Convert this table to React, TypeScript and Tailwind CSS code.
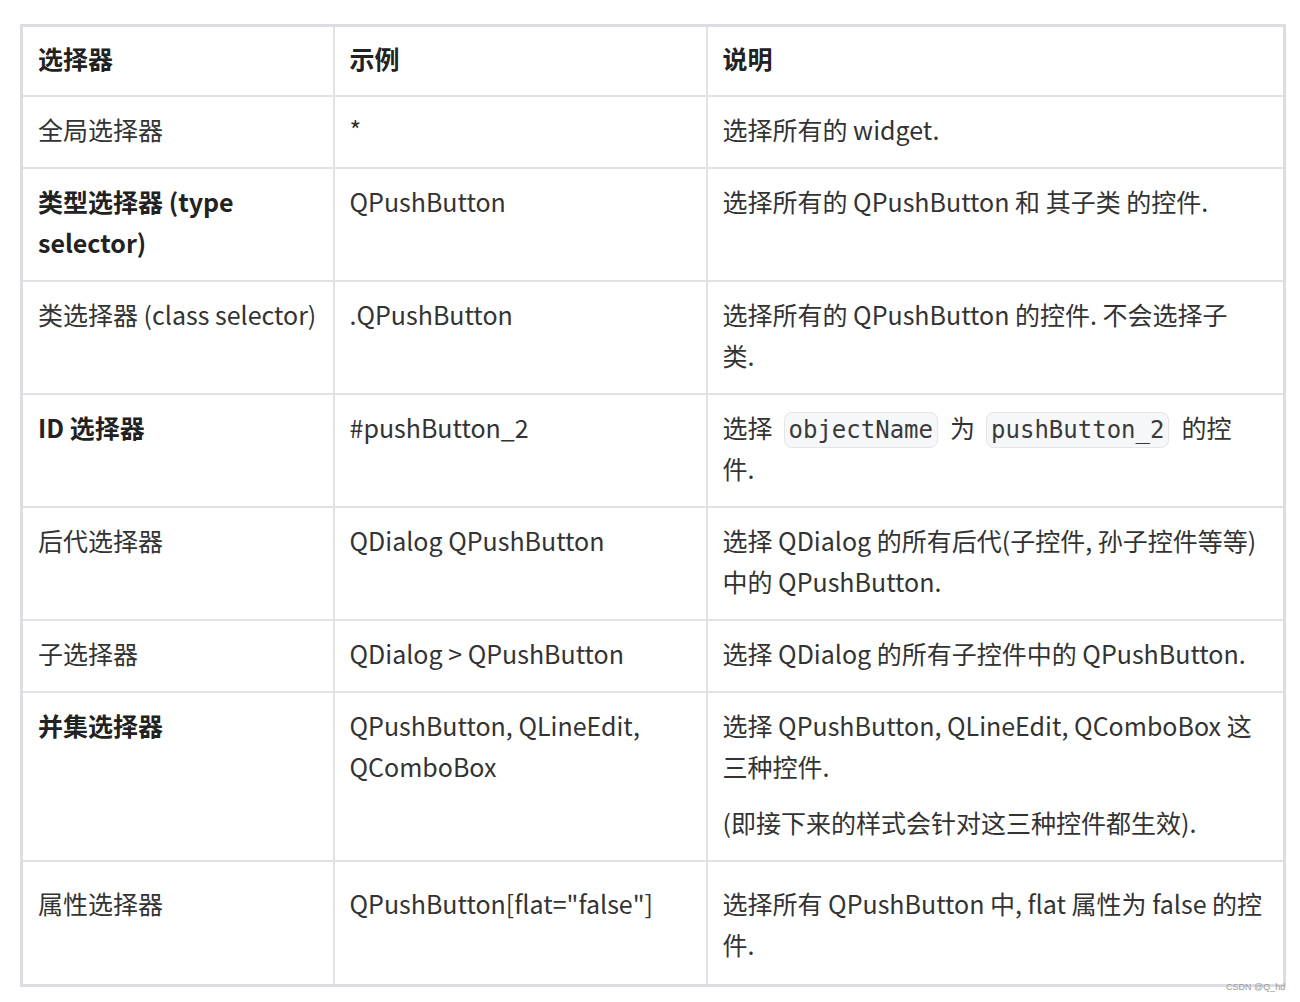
import React from "react";

const code =
  "ml-[11px] mr-[12px] rounded-lg border border-[#e3e5e8] bg-[#f6f7f9] px-[4px] py-[3px] font-['DejaVu_Sans_Mono',monospace] text-[24px] leading-[30px] text-[#3a3a3a]";

type Row = {
  name: React.ReactNode;
  bold?: boolean;
  example: React.ReactNode;
  desc: React.ReactNode;
  last?: boolean;
};

const ROWS: Row[] = [
  { name: "全局选择器", example: "*", desc: "选择所有的 widget." },
  {
    name: (
      <>
        类型选择器 (type
        <br />
        selector)
      </>
    ),
    bold: true,
    example: "QPushButton",
    desc: "选择所有的 QPushButton 和 其子类 的控件.",
  },
  {
    name: "类选择器 (class selector)",
    example: ".QPushButton",
    desc: (
      <>
        选择所有的 QPushButton 的控件. 不会选择子
        <br />
        类.
      </>
    ),
  },
  {
    name: "ID 选择器",
    bold: true,
    example: "#pushButton_2",
    desc: (
      <>
        选择<code className={code}>objectName</code>为
        <code className={code}>pushButton_2</code>的控
        <br />
        件.
      </>
    ),
  },
  {
    name: "后代选择器",
    example: "QDialog QPushButton",
    desc: (
      <>
        选择 QDialog 的所有后代(子控件, 孙子控件等等)
        <br />
        中的 QPushButton.
      </>
    ),
  },
  {
    name: "子选择器",
    example: "QDialog > QPushButton",
    desc: "选择 QDialog 的所有子控件中的 QPushButton.",
  },
  {
    name: "并集选择器",
    bold: true,
    example: (
      <>
        QPushButton, QLineEdit,
        <br />
        QComboBox
      </>
    ),
    desc: (
      <>
        <p>
          选择 QPushButton, QLineEdit, QComboBox 这
          <br />
          三种控件.
        </p>
        <p className="mt-[15px]">(即接下来的样式会针对这三种控件都生效).</p>
      </>
    ),
  },
  {
    name: "属性选择器",
    example: 'QPushButton[flat="false"]',
    desc: (
      <>
        选择所有 QPushButton 中, flat 属性为 false 的控
        <br />
        件.
      </>
    ),
    last: true,
  },
];

export default function App() {
  const cell = "border-2 border-[#e1e2e6] px-[15px] align-top";
  return (
    <div className="relative h-[1002px] w-[1300px] bg-white font-['Noto_Sans_CJK_SC',sans-serif] text-[25px] leading-[41px] text-[#333]">
      <div className="pl-[20px] pt-[24px]">
        <table className="w-[1263px] table-fixed border-collapse border-[3px] border-[#dcdde2]">
          <colgroup>
            <col className="w-[312px]" />
            <col className="w-[373px]" />
            <col className="w-[578px]" />
          </colgroup>
          <thead>
            <tr className="font-bold text-[#222]">
              <th className={`${cell} pt-[11px] pb-[16px] text-left`}>选择器</th>
              <th className={`${cell} pt-[11px] pb-[16px] text-left`}>示例</th>
              <th className={`${cell} pt-[11px] pb-[16px] text-left`}>说明</th>
            </tr>
          </thead>
          <tbody>
            {ROWS.map((r, i) => {
              const pad = r.last ? "pt-[21px] pb-[19px]" : "pt-[12px] pb-[17px]";
              return (
                <tr key={i}>
                  <td className={`${cell} ${pad} ${r.bold ? "font-bold text-[#222]" : ""}`}>
                    {r.name}
                  </td>
                  <td className={`${cell} ${pad}`}>{r.example}</td>
                  <td className={`${cell} ${pad}`}>{r.desc}</td>
                </tr>
              );
            })}
          </tbody>
        </table>
      </div>
      <span className="absolute left-[1226px] top-[982px] font-['Liberation_Sans',sans-serif] text-[9px] leading-[11px] text-[#9a9a9a]">
        CSDN @Q_hd
      </span>
    </div>
  );
}
